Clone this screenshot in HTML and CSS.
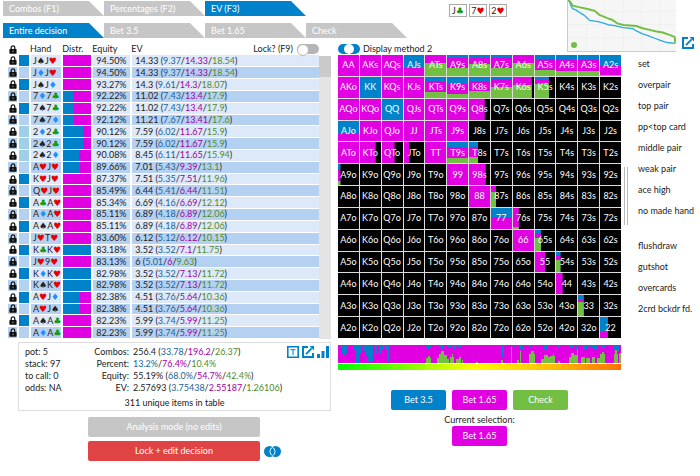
FILE: index.html
```html
<!DOCTYPE html>
<html lang="en">
<head>
<meta charset="utf-8">
<title>Decision editor</title>
<link rel="stylesheet" href="styles.css">
</head>
<body>
<svg class="defs" aria-hidden="true">
  <symbol id="lock" viewBox="0 0 8 10"><path d="M2 5V3a2 2 0 0 1 4 0v2" fill="none" stroke="#111" stroke-width="1.4"/><rect x="0" y="4.4" width="8" height="5.2" rx=".8" fill="#111"/><rect x="3.4" y="6" width="1.2" height="2" fill="#888"/></symbol>
  <symbol id="export" viewBox="0 0 12 12"><path d="M6 1H1v10h10V7" fill="none" stroke="#0082cb" stroke-width="2"/><path d="M7.5 0H12v4.5z" fill="#0082cb"/><path d="M4 8.2 9.6 2.4" stroke="#0082cb" stroke-width="1.8"/></symbol>
</svg>
<header class="top">
  <nav class="tabs">
    <button class="tab">Combos (F1)</button>
    <button class="tab">Percentages (F2)</button>
    <button class="tab on">EV (F3)</button>
    <button class="tab on second">Entire decision</button>
    <button class="tab second">Bet 3.5</button>
    <button class="tab second">Bet 1.65</button>
    <button class="tab second">Check</button>
  </nav>
  <div class="board">
    <span class="card">J<i class="suit c">♣</i></span>
    <span class="card">7<i class="suit h">♥</i></span>
    <span class="card">2<i class="suit h">♥</i></span>
  </div>
  <div class="graph">
    <svg viewBox="0 0 324 155" preserveAspectRatio="none" role="img" aria-label="Equity graph">
      <path class="gridline" d="M0 35H324M0 75H324M0 115H324M55 0V155M110 0V155M165 0V155M220 0V155M275 0V155"/>
      <path class="line-b" d="M2 0 10 20 14 27 24 30 38 40 48 46 65 62 90 66 107 70 124 76 140 78 165 84 195 87 205 94 222 102 240 108 247 111 262 117 275 122 290 127 303 130 322 132"/>
      <path class="line-g" d="M1 0 8 8 14 17 30 21 62 28 80 33 94 45 102 48 118 55 132 60 148 71 166 76 205 79 224 86 242 90 262 95 284 99 304 106 320 112 322 130"/>
      <circle cx="18" cy="137" r="9" fill="#72bf44"/>
    </svg>
  </div>
  <button class="icon open" aria-label="Open graph"><svg><use href="#export"/></svg></button>
</header>
<main class="main">
  <section class="left">
    <div class="list">
      <table class="hands">
        <thead>
          <tr>
            <th class="lk"><svg><use href="#lock"/></svg></th><th class="mark"></th><th class="hand">Hand</th><th class="dist">Distr.</th><th class="eq">Equity</th>
            <th class="ev"><div class="evhead"><span>EV</span><label>Lock? (F9) <input type="checkbox" class="switch off"></label></div></th>
          </tr>
        </thead>
        <tbody id="rows"></tbody>
      </table>
      <div class="scroll"><div class="thumb"></div></div>
    </div>
    <div class="stats">
      <ul class="pot">
        <li>pot: 5</li><li>stack: 97</li><li>to call: 0</li><li>odds: NA</li>
      </ul>
      <dl class="totals">
        <dt>Combos:</dt><dd>256.4 (<b class="b">33.78</b>/<b class="m">196.2</b>/<b class="g">26.37</b>)</dd>
        <dt>Percent:</dt><dd><b class="b">13.2%</b>/<b class="m">76.4%</b>/<b class="g">10.4%</b></dd>
        <dt>Equity:</dt><dd>55.19% (<b class="b">68.0%</b>/<b class="m">54.7%</b>/<b class="g">42.4%</b>)</dd>
        <dt>EV:</dt><dd>2.57693 (<b class="b">3.75438</b>/<b class="m">2.55187</b>/<b class="g">1.26106</b>)</dd>
      </dl>
      <div class="tools">
        <button class="icon" aria-label="Text"><svg viewBox="0 0 12 12"><path d="M.8.8h10.4v10.4H.8z" fill="none" stroke="#0082cb" stroke-width="1.6"/><path d="M3.5 3.7h5M6 3.7V9" stroke="#0082cb" fill="none"/></svg></button>
        <button class="icon" aria-label="Export"><svg><use href="#export"/></svg></button>
        <button class="icon" aria-label="Chart"><svg viewBox="0 0 12 12" fill="#0082cb"><path d="M0 8h3v4H0zM4.5 5h3v7h-3zM9 0h3v12H9z"/></svg></button>
      </div>
      <p class="count">311 unique items in table</p>
    </div>
    <div class="modes">
      <button class="btn grey">Analysis mode (no edits)</button>
      <button class="btn red">Lock + edit decision</button>
      <button class="icon rings" aria-label="Overlap"><svg viewBox="0 0 17 11"><circle cx="5.5" cy="5.5" r="5.5" fill="#0082cb"/><circle cx="11.5" cy="5.5" r="5.5" fill="#0082cb"/><path d="M8.5 1.2a5 5 0 0 1 0 8.6 5 5 0 0 1 0-8.6z" fill="#0082cb" stroke="#fff"/></svg></button>
    </div>
  </section>
  <section class="center">
    <label class="method"><input type="checkbox" class="switch" checked>Display method 2</label>
    <div class="matrix" id="matrix"></div>
    <svg class="strip" id="strip" viewBox="0 0 283 18" preserveAspectRatio="none" shape-rendering="crispEdges"></svg>
    <div class="heat"></div>
    <div class="actions">
      <button class="btn blue">Bet 3.5</button>
      <button class="btn pink">Bet 1.65</button>
      <button class="btn green">Check</button>
      <span class="current">Current selection:</span>
      <button class="btn pink picked">Bet 1.65</button>
    </div>
  </section>
  <aside class="right">
    <div class="grip"></div>
    <ul class="cats">
      <li>set</li><li>overpair</li><li>top pair</li><li>pp&lt;top card</li><li>middle pair</li><li>weak pair</li><li>ace high</li><li>no made hand</li>
      <li class="draw">flushdraw</li><li>gutshot</li><li>overcards</li><li>2crd bckdr fd.</li>
    </ul>
  </aside>
</main>
<script src="app.js"></script>
</body>
</html>
```
FILE: styles.css
```css
* { box-sizing: border-box; }
body { margin: 0; background: #fff; color: #222; font: 9px/12px Lato, "Open Sans", sans-serif; }
button, input { font: inherit; margin: 0; padding: 0; border: 0; background: none; }
dl, dd, ul, p { margin: 0; padding: 0; list-style: none; }
.defs { display: none; }
.icon { display: block; width: 12px; height: 12px; }
.icon svg { display: block; width: 100%; height: 100%; }

.top { display: flex; align-items: flex-start; padding: 1px 6px 0 3px; height: 38px; }
.tabs { flex: 0 1 404px; display: grid; grid-template-columns: repeat(4, 1fr); row-gap: 7px; }
.tab { height: 15px; padding-left: 6px; text-align: left; color: #fff; background: #c6c6c6; line-height: 15px; clip-path: polygon(0 0, calc(100% - 15px) 0, 100% 100%, 0 100%); }
.tab.on { background: #0082cb; }
.tab.on.second { grid-column: 1; }
.board { display: flex; gap: 2px; margin: 3px 0 0 42px; }
.card { width: 18px; height: 13px; border: 1px solid #aaa; text-align: center; line-height: 11px; }
.suit { font: 9px/8px "DejaVu Sans", sans-serif; }
.s { color: #222; }
.h { color: #e80000; }
.d { color: #1e90ff; }
.c { color: #0a9a0a; }
.graph { flex: 0 1 109px; height: 52px; margin: -1px 6px 0 auto; border: solid #ccc; border-width: 0 0 1px 1px; background: #f6f6f6; }
.graph svg { display: block; width: 100%; height: 100%; }
.gridline { stroke: #ededed; fill: none; stroke-width: 2; }
.line-b { fill: none; stroke: #29abe2; stroke-width: 4; }
.line-g { fill: none; stroke: #72bf44; stroke-width: 6; }
.open { margin-top: 36px; }

.main { display: grid; grid-template-columns: 338fr 283fr 79fr; margin-top: 5px; }
.left { padding: 0 7px 0 8px; }
.list { display: flex; height: 296px; }
.hands { flex: 1; height: 296px; border-collapse: collapse; table-layout: fixed; }
.hands th { font-weight: normal; text-align: left; padding: 0; height: 12px; line-height: 12px; }
.hands td { padding: 0; height: 11px; line-height: 10px; white-space: nowrap; border-bottom: 1px solid #fff; border-right: 2px solid #fff; background: #dde8f8; }
.hands tbody tr:nth-child(even) td { background: #b4d1f2; }
.hands tbody tr .lk { background: none; }
.lk { width: 10px; }
.lk svg { display: block; width: 8px; height: 9px; margin-left: 1px; }
.mark { width: 12px; }
.hands tbody tr .mark { background: #0082cb; }
.hands tbody tr .mark.light { background: #9fd0ea; }
.hand { width: 30px; }
.hands td.hand { padding-left: 2px; }
.dist { width: 30px; }
.eq { width: 39px; }
.hands td.eq, .hands td.ev { padding-left: 3px; }
.hands th.ev { padding-left: 0; }
.hands td.ev { border-right: 0; }
.evhead { display: flex; justify-content: space-between; }
.evhead label { display: flex; gap: 4px; align-items: center; }
b { font-weight: normal; }
.b { color: #1a6496; }
.m { color: #a000a0; }
.g { color: #4f8a2c; }
.switch { appearance: none; width: 22px; height: 10px; border-radius: 5px; background: #0082cb; display: flex; justify-content: center; }
.switch::before { content: ""; width: 10px; height: 10px; border-radius: 50%; background: #fff; }
.switch.off { background: #b5b5b5; justify-content: flex-start; }
.switch.off::before { border: 1px solid #b5b5b5; }
.scroll { flex: 0 0 12px; margin-top: 13px; background: #e4e4e4; }
.thumb { height: 21px; background: #cacaca; }

.stats { display: grid; grid-template-columns: 44px auto 1fr; margin: 3px 0 0 10px; padding: 3px 0 1px 6px; border: 1px solid #ddd; }
.totals { display: grid; grid-template-columns: 60px auto; column-gap: 4px; white-space: nowrap; }
.totals dt { text-align: right; }
.tools { display: flex; gap: 3px; justify-content: flex-end; padding-right: 1px; }
.count { grid-column: 1 / -1; text-align: center; margin-top: 3px; height: 12px; padding-right: 6px; }
.modes { display: grid; grid-template-columns: 172px 17px; gap: 4px; margin: 6px 0 0 80px; align-items: center; }
.btn { height: 20px; border-radius: 2px; color: #fff; }
.grey { background: #c6c6c6; grid-column: 1; }
.red { background: #e04343; grid-column: 1; }
.rings { width: 17px; height: 11px; }
.blue { background: #0082cb; }
.pink { background: #e100e1; }
.green { background: #72bf44; }

.method { display: flex; align-items: center; gap: 3px; height: 12px; }
.matrix { display: grid; grid-template-columns: repeat(13, 1fr); gap: 1px; aspect-ratio: 1; background: #ddd; }
.cell { display: flex; align-items: center; justify-content: center; color: #fff; background-color: #000; background-repeat: no-repeat; }
.strip { display: block; width: 100%; height: 18px; margin-top: 7px; background: #e100e1; }
.heat { height: 6px; margin-top: 1px; background: linear-gradient(90deg, #0f0, #ff0 48%, #ffc000 75%, #ff7000); }
.actions { display: grid; grid-template-columns: repeat(3, 55px); column-gap: 6px; justify-content: center; margin-top: 20px; }
.current { grid-column: 1 / -1; text-align: center; height: 16px; line-height: 20px; }
.picked { grid-column: 2; }

.right { display: flex; gap: 10px; padding-left: 3px; }
.grip { width: 4px; height: 58px; margin-top: 124px; border: solid #bbb; border-width: 0 1px; }
.cats { padding-top: 15px; white-space: nowrap; }
.cats li { height: 21px; }
.cats .draw { margin-top: 14px; }
```
FILE: app.js
```js
const BLUE = '#0082cb', PINK = '#e100e1', GREEN = '#72bf44';
const SUITS = { s: '♠', h: '♥', d: '♦', c: '♣' };

// hand, blue share of the distribution, equity, EV, EV per action
const hands = [
  ['JsJh', 0, '94.50', '14.33', '9.37/14.33/18.54'],
  ['JdJh', 0, '94.50', '14.33', '9.37/14.33/18.54'],
  ['JsJd', 0, '93.27', '14.3', '9.61/14.3/18.07'],
  ['7d7c', 40, '92.22', '11.02', '7.43/13.4/17.9'],
  ['7s7c', 40, '92.22', '11.02', '7.43/13.4/17.9'],
  ['7s7d', 40, '92.12', '11.21', '7.67/13.41/17.6'],
  ['2d2c', 72, '90.12', '7.59', '6.02/11.67/15.9'],
  ['2s2c', 72, '90.12', '7.59', '6.02/11.67/15.9'],
  ['2s2d', 56, '90.08', '8.45', '6.11/11.65/15.94'],
  ['AhJh', 60, '89.66', '7.01', '5.43/9.39/13.1'],
  ['KhJh', 0, '87.37', '7.51', '5.35/7.51/11.96'],
  ['QhJh', 0, '85.49', '6.44', '5.41/6.44/11.51'],
  ['AcAh', 0, '85.34', '6.69', '4.16/6.69/12.12'],
  ['AdAh', 0, '85.11', '6.89', '4.18/6.89/12.06'],
  ['AsAh', 0, '85.11', '6.89', '4.18/6.89/12.06'],
  ['JhTh', 0, '83.60', '6.12', '5.12/6.12/10.15'],
  ['KcKh', 100, '83.18', '3.52', '3.52/7.1/11.75'],
  ['Jh9h', 0, '83.13', '6', '5.01/6/9.63'],
  ['KdKh', 100, '82.98', '3.52', '3.52/7.13/11.72'],
  ['KsKh', 100, '82.98', '3.52', '3.52/7.13/11.72'],
  ['AhJd', 60, '82.38', '4.51', '3.76/5.64/10.36'],
  ['AhJs', 60, '82.38', '4.51', '3.76/5.64/10.36'],
  ['AsAc', 0, '82.23', '5.99', '3.74/5.99/11.25'],
  ['AdAc', 0, '82.23', '5.99', '3.74/5.99/11.25']
];
const suit = k => `<i class="suit ${k}">${SUITS[k]}</i>`;
document.getElementById('rows').innerHTML = hands.map(([h, share, eq, ev, parts]) => {
  const [b, m, g] = parts.split('/');
  return `<tr><td class="lk"><svg><use href="#lock"/></svg></td>
    <td class="mark${h[0] === '2' ? ' light' : ''}"></td>
    <td class="hand">${h[0]}${suit(h[1])}${h[2]}${suit(h[3])}</td>
    <td class="dist" style="background:linear-gradient(90deg,${BLUE} ${share}%,${PINK} ${share}%)"></td>
    <td class="eq">${eq}%</td>
    <td class="ev">${ev} (<b class="b">${b}</b>/<b class="m">${m}</b>/<b class="g">${g}</b>)</td></tr>`;
}).join('');

// filled width, end of blue, end of pink (percent); cells not listed are empty
const P = [100, 0, 100], B = [100, 100, 100];
const mix = {
  AA: P, AKs: P, AQs: P, AJs: [100, 60, 100], ATs: [100, 4, 38], A9s: [100, 15, 62], A8s: [100, 15, 42], A7s: [100, 12, 62],
  A6s: [100, 4, 40], A5s: [100, 20, 70], A4s: [100, 22, 77], A3s: [100, 22, 75], A2s: [100, 52, 95],
  AKo: P, KK: B, KQs: P, KJs: P, KTs: [100, 18, 73], K9s: [100, 31, 82], K8s: [100, 18, 68], K7s: [100, 8, 50],
  K6s: [90, 5, 40], K5s: [70, 12, 32],
  AQo: P, KQo: P, QQ: B, QJs: P, QTs: P, Q9s: P, Q8s: [75, 0, 100],
  AJo: [100, 62, 100], KJo: P, QJo: P, JJ: P, JTs: P, J9s: P,
  ATo: P, KTo: [75, 0, 100], QTo: [60, 0, 100], JTo: [25, 0, 100], TT: P, T9s: [100, 24, 78], T8s: [45, 24, 72],
  A9o: [12, 25, 82], 99: P, '98s': [80, 0, 100], 88: P, '87s': [25, 0, 30],
  77: [100, 42, 100], '76s': [28, 0, 92], 66: P, '65s': [30, 12, 38],
  55: [50, 0, 100], '54s': [22, 15, 38], 44: [32, 0, 100], 33: [28, 22, 35], 22: [38, 70, 100]
};
const ranks = 'AKQJT98765432';
let cells = '';
for (let r = 0; r < 13; r++) {
  for (let c = 0; c < 13; c++) {
    const name = r === c ? ranks[r] + ranks[r] : c > r ? ranks[r] + ranks[c] + 's' : ranks[c] + ranks[r] + 'o';
    const m = mix[name];
    const fill = m ? ` style="background-image:linear-gradient(${BLUE} ${m[1]}%,${PINK} ${m[1]}%,${PINK} ${m[2]}%,${GREEN} ${m[2]}%);background-size:${m[0]}% 100%"` : '';
    cells += `<div class="cell"${fill}>${name}</div>`;
  }
}
document.getElementById('matrix').innerHTML = cells;

// x, width, height of the bars hanging from the top and rising from the bottom
const tops = [[3,2,3],[4,5,8],[5,3,11],[9,1,2],[15,7,5],[17,5,15],[18,3,18],[22,2,8],[25,4,6],[28,3,10],[29,6,17],[32,3,17],[37,2,9],[41,3,8],[43,3,5],[45,1,2],[47,2,5],[49,2,17],
  [88,5,3],[90,1,5],[101,3,3],[104,2,5],[110,4,2],[115,3,4],[120,4,2],[139,2,1],[163,3,9],[164,1,12],[175,2,2],[182,3,5],[191,3,3],[195,2,1],[206,4,4],[209,1,6],[219,3,3],[231,5,3],[238,2,5],[245,5,4],[252,8,2],[256,3,4],[263,4,3],[275,6,4],[279,2,7]];
const bottoms = [[88,5,5],[90,2,7],[99,3,5],[101,2,9],[103,3,12],[106,3,8],[109,2,4],[112,4,6],[114,1,9],[118,3,4],[121,2,6],[124,1,3],[138,2,1],[163,2,3],[173,1,16],[179,2,3],[182,1,12],[191,6,9],[193,3,12],[203,3,4],[206,4,8],[209,3,6],[212,5,7],[215,1,9],[220,2,2],[231,2,6],[233,3,10],[236,4,8],[239,1,13],[243,4,6],[248,4,5],[254,3,6],[259,3,5],[262,5,9],[264,2,11],[276,4,9],[277,2,13],[281,2,10]];
document.getElementById('strip').innerHTML =
  tops.map(([x, w, h]) => `<rect x="${x}" y="0" width="${w}" height="${h}" fill="${BLUE}"/>`).join('') +
  bottoms.map(([x, w, h]) => `<rect x="${x}" y="${18 - h}" width="${w}" height="${h}" fill="${GREEN}"/>`).join('');
```
